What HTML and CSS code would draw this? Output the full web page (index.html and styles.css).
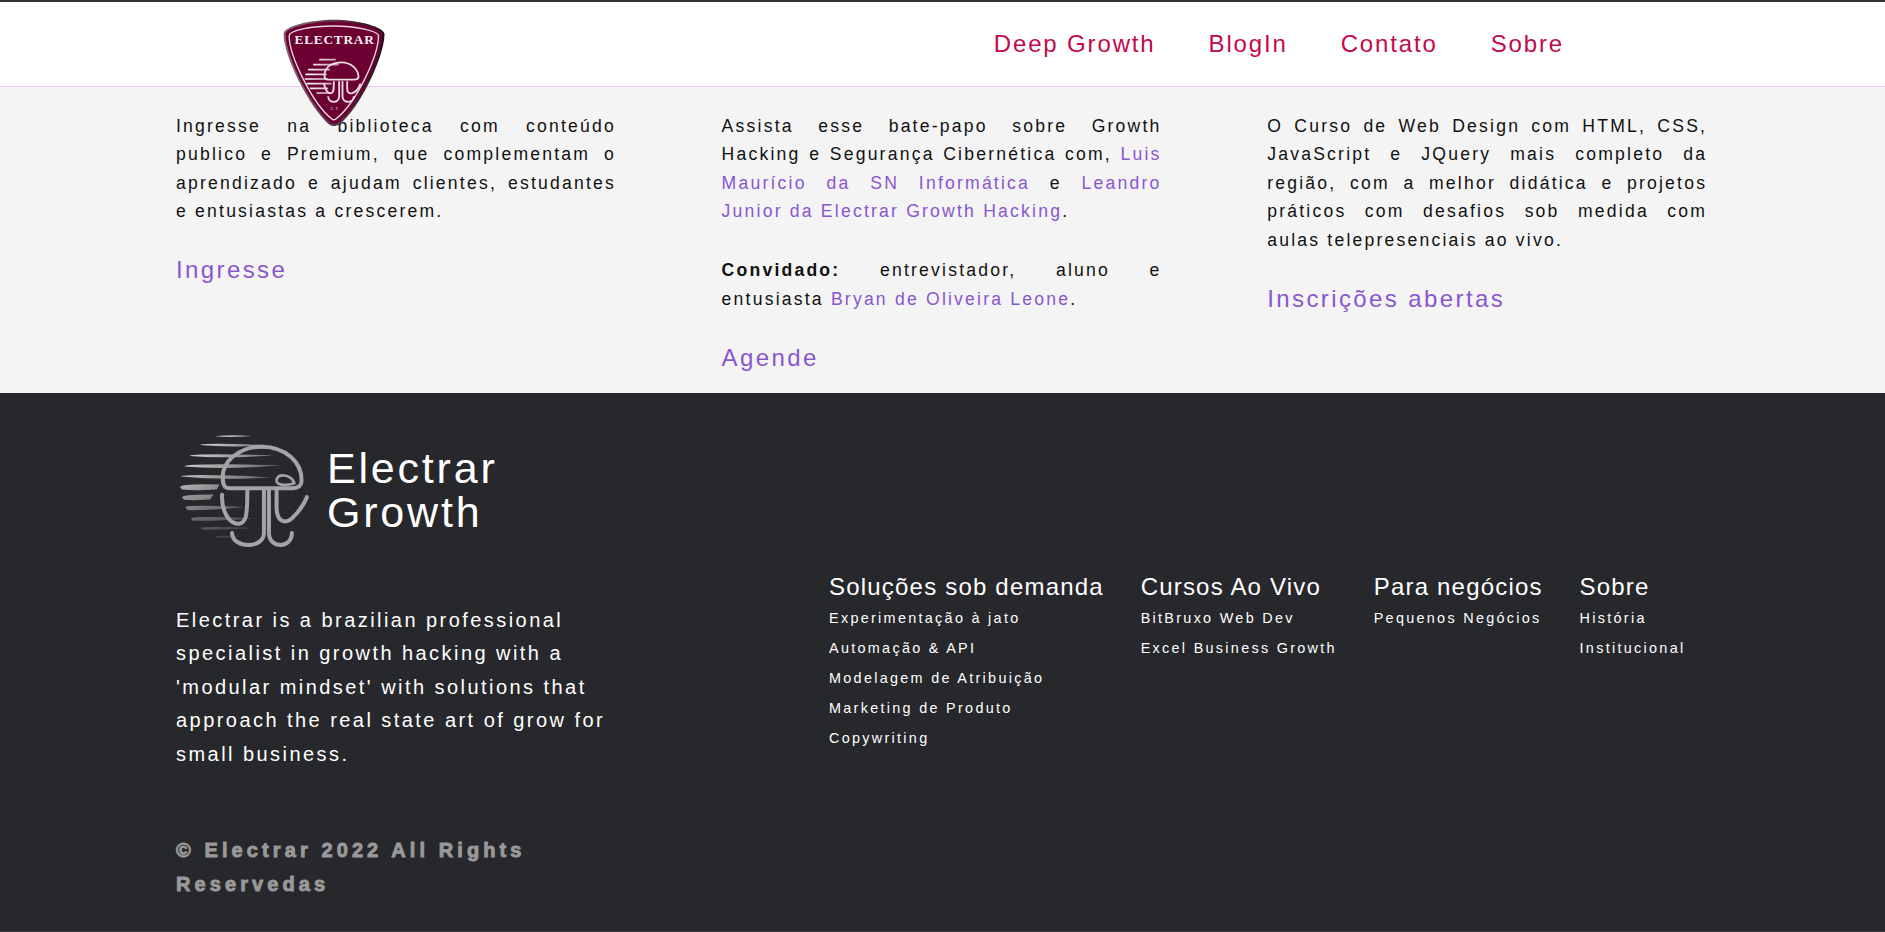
FILE: index.html
```html
<!DOCTYPE html>
<html lang="pt">
<head>
<meta charset="utf-8">
<title>Electrar Growth</title>
<link rel="stylesheet" href="styles.css">
</head>
<body>
<header class="topbar">
  <nav class="nav">
    <a href="#">Deep Growth</a>
    <a href="#">BlogIn</a>
    <a href="#">Contato</a>
    <a href="#">Sobre</a>
  </nav>
</header>
<svg class="badge" viewBox="70 58 305 324" aria-label="Electrar">
  <defs>
    <linearGradient id="rim" x1="0" y1="0" x2="1" y2="0">
      <stop offset="0" stop-color="#8a6a78"/><stop offset=".6" stop-color="#5a2a40"/><stop offset="1" stop-color="#151515"/>
    </linearGradient>
    <linearGradient id="streak" x1="0" y1="0" x2="1" y2="0">
      <stop offset="0" stop-color="#fff"/><stop offset="1" stop-color="#fff" stop-opacity=".6"/>
    </linearGradient>
  </defs>
  <path d="M71 102 C71 80 150 60 222 60 C295 60 374 82 374 104 C374 170 300 325 240 373 C228 382 215 381 205 372 C150 322 71 172 71 102Z" fill="url(#rim)"/>
  <path d="M77 103 C77 84 152 66 222 66 C292 66 368 86 368 104 C368 168 296 320 236 367 C226 375 216 374 208 366 C154 318 77 170 77 103Z" fill="#6d0032"/>
  <path d="M88 108 C88 92 155 79 222 79 C288 79 356 95 356 108 C356 166 290 310 228 358 C224 361 220 361 216 358 C156 310 88 166 88 108Z" fill="none" stroke="#e9dbe1" stroke-width="4"/>
  <text class="badge-text" x="223" y="134" text-anchor="middle" textLength="238">ELECTRAR</text>
  <g stroke="url(#streak)" stroke-width="5" fill="none">
    <path d="M178 180 H228M160 195 H236M145 210 H210M137 224 H200M135 238 H205M140 252 H215M150 266 H205M170 280 H215"/>
  </g>
  <g fill="none" stroke="#e8dde2" stroke-width="5.5">
    <path d="M194 228 C194 196 225 188 245 188 C272 188 296 208 296 232 C296 240 288 240 280 240 L205 240 C197 240 194 236 194 228Z"/>
    <path d="M192 250 C196 272 205 285 216 280 C222 277 222 268 222 245"/>
    <path d="M238 245 V290 C238 312 205 312 205 290"/>
    <path d="M248 245 V290 C248 312 282 312 282 290"/>
    <path d="M262 245 V268 C262 290 290 284 302 252"/>
  </g>
  <text class="badge-small" x="226" y="332" text-anchor="middle">E . P .</text>
</svg>
<main class="cards">
  <section class="card">
    <p>Ingresse na biblioteca com conteúdo publico e Premium, que complementam o aprendizado e ajudam clientes, estudantes e entusiastas a crescerem.</p>
    <a class="cta" href="#">Ingresse</a>
  </section>
  <section class="card">
    <p>Assista esse bate-papo sobre Growth Hacking e Segurança Cibernética com, <a href="#">Luis Maurício da SN Informática</a> e <a href="#">Leandro Junior da Electrar Growth Hacking</a>.</p>
    <p><strong>Convidado:</strong> entrevistador, aluno e entusiasta <a href="#">Bryan de Oliveira Leone</a>.</p>
    <a class="cta" href="#">Agende</a>
  </section>
  <section class="card">
    <p>O Curso de Web Design com HTML, CSS, JavaScript e JQuery mais completo da região, com a melhor didática e projetos práticos com desafios sob medida com aulas telepresenciais ao vivo.</p>
    <a class="cta" href="#">Inscrições abertas</a>
  </section>
</main>
<footer class="footer">
  <div class="about">
    <div class="brand">
      <svg class="jelly" viewBox="60 45 390 340" aria-hidden="true">
        <defs>
          <linearGradient id="fade" gradientUnits="userSpaceOnUse" x1="0" y1="45" x2="0" y2="360">
            <stop offset="0" stop-color="#fff"/><stop offset=".45" stop-color="#bbb"/><stop offset="1" stop-color="#4a4a4c"/>
          </linearGradient>
          <linearGradient id="fadeX" x1="0" y1="0" x2="1" y2="0">
            <stop offset="0" stop-color="#fff" stop-opacity="1"/><stop offset="1" stop-color="#fff" stop-opacity=".15"/>
          </linearGradient>
          <mask id="fadeMask" maskUnits="userSpaceOnUse" x="50" y="40" width="400" height="330">
            <rect x="50" y="40" width="400" height="330" fill="url(#fadeX)"/>
          </mask>
        </defs>
        <g fill="url(#fade)" mask="url(#fadeMask)">
          <path d="M163 49 Q210 43 278 48 Q210 54 163 49Z"/>
          <path d="M120 75 Q125 67 340 76 Q200 83 120 75Z"/>
          <path d="M88 108 Q95 99 345 106 Q190 117 88 108Z"/>
          <path d="M72 140 Q78 129 365 136 Q190 150 72 140Z"/>
          <path d="M62 170 Q68 160 340 172 Q190 182 62 170Z"/>
          <path d="M60 201 Q66 191 178 194 L170 209 Q100 213 66 209 Q60 206 60 201Z"/>
          <path d="M65 232 Q72 223 160 224 L150 239 Q100 243 72 240Z"/>
          <path d="M75 262 Q85 253 255 262 Q160 272 82 271Z"/>
          <path d="M92 296 Q100 288 285 296 Q160 305 98 303Z"/>
          <path d="M122 325 Q130 319 285 325 Q180 331 128 330Z"/>
          <path d="M165 351 Q175 346 245 351 Q190 355 170 354Z"/>
        </g>
        <g fill="none" stroke="#a4a4a6" stroke-width="12" stroke-linecap="round" stroke-linejoin="round">
          <path d="M190 190 C176 125 240 80 305 80 C378 80 428 128 425 185 C424 200 410 205 395 205 L210 205 C196 205 190 200 188 180"/>
          <path d="M402 186 C390 163 355 160 350 180 C347 196 375 199 404 190" stroke-width="8"/>
          <path d="M186 225 C184 270 205 315 238 312 C258 308 262 290 262 212"/>
          <path d="M312 212 V340 C312 388 218 388 216 340"/>
          <path d="M327 212 V340 C327 388 396 388 396 340"/>
          <path d="M350 212 V262 C350 310 380 315 402 290 C420 272 432 255 441 232"/>
        </g>
      </svg>
      <div class="brand-name">Electrar<br>Growth</div>
    </div>
    <p class="mission">Electrar is a brazilian professional specialist in growth hacking with a 'modular mindset' with solutions that approach the real state art of grow for small business.</p>
    <p class="copy">© Electrar 2022 All Rights Reservedas</p>
  </div>
  <div class="links">
    <div class="col">
      <h4>Soluções sob demanda</h4>
      <a href="#">Experimentação à jato</a>
      <a href="#">Automação &amp; API</a>
      <a href="#">Modelagem de Atribuição</a>
      <a href="#">Marketing de Produto</a>
      <a href="#">Copywriting</a>
    </div>
    <div class="col">
      <h4>Cursos Ao Vivo</h4>
      <a href="#">BitBruxo Web Dev</a>
      <a href="#">Excel Business Growth</a>
    </div>
    <div class="col">
      <h4>Para negócios</h4>
      <a href="#">Pequenos Negócios</a>
    </div>
    <div class="col">
      <h4>Sobre</h4>
      <a href="#">História</a>
      <a href="#">Institucional</a>
    </div>
  </div>
</footer>
</body>
</html>
```

FILE: styles.css
```css
* { box-sizing: border-box; }
html, body { margin: 0; padding: 0; }
body {
  position: relative;
  height: 932px;
  overflow: hidden;
  background: #f4f4f4;
  font-family: "Liberation Sans", Arial, sans-serif;
  display: flex;
  flex-direction: column;
}
a { text-decoration: none; color: inherit; }

.topbar {
  height: 87px;
  flex: none;
  background: #fff;
  border-top: 2px solid #333;
  border-bottom: 1px solid #f5c6f5;
  display: flex;
  justify-content: flex-end;
  align-items: center;
  padding: 0 321px 0 0;
}
.nav { display: flex; gap: 53px; }
.nav a {
  font-size: 24px;
  letter-spacing: 1.85px;
  color: #c2094f;
}

.badge {
  position: absolute;
  left: 283px;
  top: 19px;
  width: 102px;
  height: 108px;
}
.badge-text {
  font-family: "Liberation Serif", serif;
  font-weight: 700;
  font-size: 40px;
  fill: #f6eef1;
}
.badge-small {
  font-family: "Liberation Serif", serif;
  font-size: 11px;
  fill: #ddd;
}

.cards {
  height: 306px;
  flex: none;
  padding: 24.6px 0 0 176px;
  display: grid;
  grid-template-columns: repeat(3, 440px);
  column-gap: 105.6px;
}
.card p {
  margin: 0 0 30.4px;
  font-size: 17.6px;
  line-height: 28.6px;
  letter-spacing: 2.2px;
  text-align: justify;
  color: #111;
}
.card p a { color: #8a56cf; }
.cta {
  display: block;
  margin-top: 5.5px;
  font-size: 24px;
  letter-spacing: 2.4px;
  line-height: 28px;
  color: #8a56cf;
}

.footer {
  flex: 1;
  background: #27282c;
  color: #fff;
  padding: 42px 176px 0;
  display: flex;
  border-bottom: 1px solid #3a3b3e;
}
.about { width: 440px; flex: none; }
.brand { display: flex; align-items: center; gap: 17px; }
.jelly { width: 130px; height: 113px; margin-left: 4px; flex: none; }
.brand-name {
  font-size: 43px;
  line-height: 44px;
  letter-spacing: 2.8px;
  padding-bottom: 3px;
}
.mission {
  margin: 55.5px 0 0;
  font-size: 20px;
  line-height: 33.6px;
  letter-spacing: 2.45px;
}
.copy {
  margin: 62.5px 0 0;
  font-size: 20px;
  line-height: 33.6px;
  font-weight: 700;
  letter-spacing: 4.1px;
  color: #999;
  -webkit-text-stroke: 0.9px #999;
}
.links {
  margin: 138px 0 0 213px;
  display: flex;
  gap: 36.8px;
  align-items: flex-start;
}
.col h4 {
  margin: 0 0 1.5px;
  font-size: 24px;
  line-height: 28px;
  font-weight: 400;
  letter-spacing: 1.2px;
  white-space: nowrap;
}
.col a {
  display: block;
  font-size: 14.4px;
  line-height: 30px;
  letter-spacing: 2.3px;
  white-space: nowrap;
}
```
